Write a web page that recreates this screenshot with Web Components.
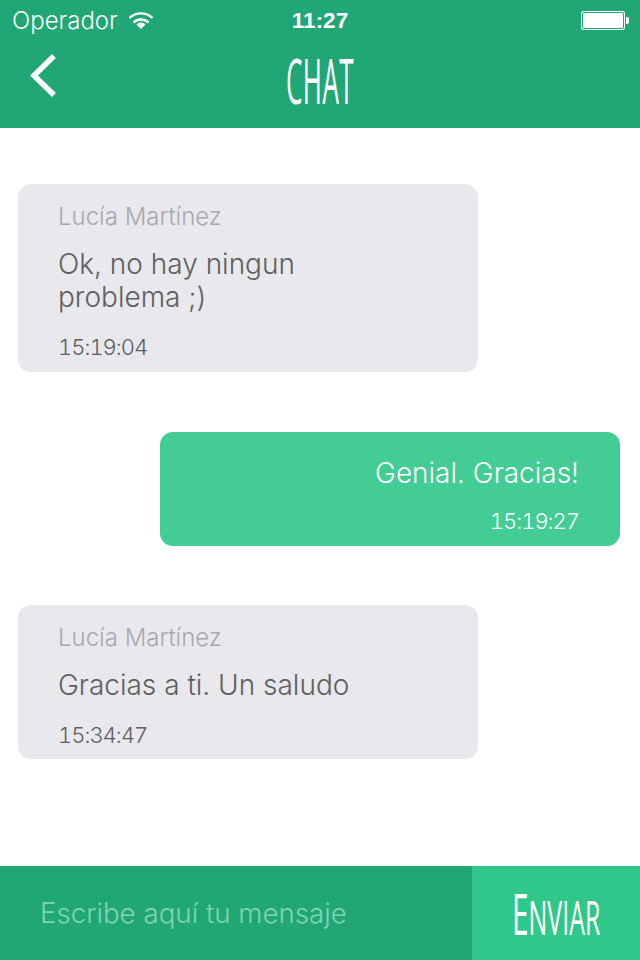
<!DOCTYPE html>
<html lang="es">
<head>
<meta charset="utf-8">
<title>Chat</title>
<style>
  html, body { margin: 0; padding: 0; background: #fff; }
  body { font-family: Inter, "Liberation Sans", Arial, sans-serif; font-weight: 300; }
</style>
</head>
<body>
<chat-app>
  <chat-header slot="header" title-text="Chat"></chat-header>
  <chat-bubble sender="Lucía Martínez" time="15:19:04">Ok, no hay ningun<br>problema ;)</chat-bubble>
  <chat-bubble mine time="15:19:27">Genial. Gracias!</chat-bubble>
  <chat-bubble sender="Lucía Martínez" time="15:34:47" style="padding-bottom: 11px">Gracias a ti. Un saludo</chat-bubble>
  <chat-input slot="footer"></chat-input>
</chat-app>

<script>
class ChatApp extends HTMLElement {
  constructor () {
    super();
    this.attachShadow({ mode: 'open' }).innerHTML = `
      <style>
        :host { display: flex; flex-direction: column; width: 640px; height: 960px; overflow: hidden; }
        main { flex: 1; display: flex; flex-direction: column; padding: 56px 20px 0 18px; }
      </style>
      <slot name="header"></slot>
      <main><slot></slot></main>
      <slot name="footer"></slot>`;
  }
}

class ChatHeader extends HTMLElement {
  constructor () {
    super();
    this.attachShadow({ mode: 'open' }).innerHTML = `
      <style>
        :host { display: block; height: 128px; background: #20a775; color: #fff; }
        .status { display: grid; grid-template-columns: 1fr auto 1fr; align-items: center; height: 41px; padding: 0 12px; font-size: 24px; }
        .left { display: flex; align-items: center; gap: 10px; }
        .time { font: bold 22.5px "Liberation Sans", sans-serif; }
        .batt { justify-self: end; display: flex; align-items: center; gap: 1px; margin-right: -1px; }
        .batt i { display: block; box-sizing: border-box; width: 44px; height: 19px; border-radius: 3px; background: #fff; box-shadow: inset 0 0 0 1px #fff, inset 0 0 0 2px #20a775; }
        .batt b { display: block; width: 3px; height: 7px; border-radius: 0 2px 2px 0; background: #fff; }
        nav { position: relative; height: 87px; display: flex; justify-content: center; }
        .back { position: absolute; left: 29px; top: 13px; }
        h1 { margin: 0; font: 400 62px/78px "Open Sans", sans-serif; text-transform: uppercase; transform: scaleX(.42); letter-spacing: 1px; }
      </style>
      <div class="status">
        <div class="left">Operador
          <svg width="26" height="18" viewBox="0 0 26 18" fill="none" stroke="#fff" stroke-width="2.4">
            <path d="M1.5 6a16.5 16.5 0 0 1 23 0"/><path d="M5.5 10.5a11 11 0 0 1 15 0"/><path d="M13 17l-4.6-4.6a6.5 6.5 0 0 1 9.2 0z" fill="#fff" stroke="none"/>
          </svg>
        </div>
        <div class="time">11:27</div>
        <div class="batt"><i></i><b></b></div>
      </div>
      <nav>
        <svg class="back" width="28" height="44" viewBox="0 0 28 44" fill="none" stroke="#fff" stroke-width="5.5">
          <path d="M25 2L5 21.5 25 41"/>
        </svg>
        <h1>${this.getAttribute('title-text')}</h1>
      </nav>`;
  }
}

class ChatBubble extends HTMLElement {
  constructor () {
    super();
    const sender = this.getAttribute('sender');
    this.attachShadow({ mode: 'open' }).innerHTML = `
      <style>
        :host { display: block; box-sizing: border-box; width: 460px; margin-bottom: 60px; padding: 19px 41px 12px 40px; border-radius: 13px; background: #e8e8ed; color: #5f5f5f; font-size: 28px; line-height: 33px; }
        :host([mine]) { align-self: flex-end; margin-bottom: 59px; padding-top: 25px; background: #43cc94; color: #fff; text-align: right; }
        .who { color: #a8a8ac; font-size: 24px; line-height: 28px; margin-bottom: 17px; }
        .time { margin-top: 20px; font-size: 22px; line-height: 26px; color: #5f5f5f; font-variant-numeric: tabular-nums; letter-spacing: -1px; }
        :host([mine]) .time { margin-top: 18px; color: #fff; }
      </style>
      ${sender ? `<div class="who">${sender}</div>` : ''}
      <div><slot></slot></div>
      <div class="time">${this.getAttribute('time')}</div>`;
  }
}

class ChatInput extends HTMLElement {
  constructor () {
    super();
    this.attachShadow({ mode: 'open' }).innerHTML = `
      <style>
        :host { display: flex; height: 94px; background: #20a775; }
        .field { flex: 1; display: flex; align-items: center; padding-left: 40px; font-size: 27.7px; color: #80d3b2; }
        .send { width: 168px; display: flex; align-items: center; justify-content: center; background: #2fc78a; color: #fff; }
        .send div { font: 400 47px/1 "Open Sans", sans-serif; text-transform: uppercase; transform: scaleX(.53); white-space: nowrap; }
        .send b { font-weight: 400; font-size: 56px; }
      </style>
      <div class="field">Escribe aquí tu mensaje</div>
      <div class="send"><div><b>E</b>nviar</div></div>`;
  }
}

customElements.define('chat-app', ChatApp);
customElements.define('chat-header', ChatHeader);
customElements.define('chat-bubble', ChatBubble);
customElements.define('chat-input', ChatInput);
</script>
</body>
</html>
